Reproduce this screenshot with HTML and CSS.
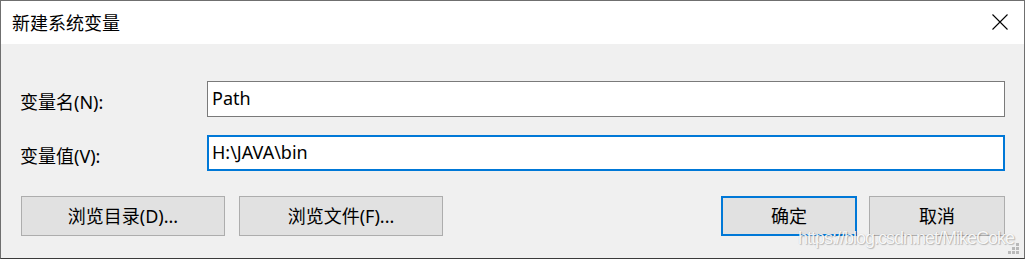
FILE: index.html
```html
<!DOCTYPE html>
<html lang="zh-CN">
<head>
    <meta charset="UTF-8">
    <title>新建系统变量</title>
    <link rel="stylesheet" href="styles.css">
</head>
<body>
    <div class="window">
        <div class="titlebar">
            <span class="title">新建系统变量</span>
            <svg class="close" width="16" height="16" viewBox="0 0 16 16">
                <path d="M0.5 0.5 L15.5 15.5 M15.5 0.5 L0.5 15.5" stroke="#000" stroke-width="1.1" fill="none"/>
            </svg>
        </div>

        <div class="content">
            <div class="row">
                <label class="label" for="var-name">变量名(N):</label>
                <input class="field" type="text" id="var-name" value="Path">
            </div>
            <div class="row">
                <label class="label" for="var-value">变量值(V):</label>
                <input class="field focused" type="text" id="var-value" value="H:\JAVA\bin">
            </div>

            <div class="buttons">
                <div class="group">
                    <button class="btn wide">浏览目录(D)...</button>
                    <button class="btn wide">浏览文件(F)...</button>
                </div>
                <div class="group right">
                    <button class="btn small default">确定</button>
                    <button class="btn small">取消</button>
                </div>
            </div>
        </div>

        <!-- watermark and resize grip sit over the dialog -->
        <div class="watermark">https://blog.csdn.net/MikeCoke</div>
        <svg class="grip" width="12" height="12" viewBox="0 0 12 12">
            <rect x="8" y="0" width="3" height="3" fill="#b9b9b9"/>
            <rect x="4" y="4" width="3" height="3" fill="#b9b9b9"/>
            <rect x="8" y="4" width="3" height="3" fill="#b9b9b9"/>
            <rect x="0" y="8" width="3" height="3" fill="#b9b9b9"/>
            <rect x="4" y="8" width="3" height="3" fill="#b9b9b9"/>
            <rect x="8" y="8" width="3" height="3" fill="#b9b9b9"/>
        </svg>
    </div>
</body>
</html>
```

FILE: styles.css
```css
body {
    margin: 0;
    font-family: "Noto Sans", "Noto Sans CJK SC", sans-serif;
    background: #3c3c3c;
}
.window {
    position: relative;
    box-sizing: border-box;
    width: 1025px;
    height: 259px;
    border: 1px solid #6f6f6f;
    border-bottom-color: #3a3a3a;
    background: #f0f0f0;
    display: flex;
    flex-direction: column;
}
.titlebar {
    height: 43px;
    background: #fff;
    display: flex;
    align-items: center;
    justify-content: space-between;
    padding: 0 16px 0 11px;
    flex-shrink: 0;
}
.title {
    font-size: 18px;
    color: #000;
    line-height: 1;
    padding-top: 1px;
}
.close {
    margin-top: -1px;
}
.content {
    padding: 37px 19px 0 19px;
    display: flex;
    flex-direction: column;
    gap: 18px;
}
.row {
    display: flex;
    align-items: center;
    justify-content: space-between;
    height: 36px;
}
.label {
    font-size: 18px;
    color: #000;
    padding-top: 3px;
}
.field {
    box-sizing: border-box;
    width: 798px;
    height: 36px;
    margin: 0;
    padding: 0 0 2px 4px;
    border: 1px solid #7a7a7a;
    background: #fff;
    font-family: "Noto Sans", "Noto Sans CJK SC", sans-serif;
    font-size: 18px;
    color: #000;
    outline: none;
}
.field.focused {
    border: 2px solid #0078d7;
    padding-left: 3px;
}
.buttons {
    display: flex;
    justify-content: space-between;
    margin-top: 7px;
}
.group {
    display: flex;
    gap: 14px;
    padding-left: 1px;
}
.group.right {
    gap: 12px;
    padding-left: 0;
}
.btn {
    box-sizing: border-box;
    height: 40px;
    margin: 0;
    border: 1px solid #adadad;
    background: #e1e1e1;
    font-family: "Noto Sans", "Noto Sans CJK SC", sans-serif;
    font-size: 18px;
    color: #000;
    padding: 0 0 2px 0;
}
.btn.wide {
    width: 204px;
}
.btn.small {
    width: 136px;
}
.btn.default {
    border: 2px solid #0078d7;
}
.watermark {
    position: absolute;
    left: 797px;
    top: 227px;
    font-family: "Liberation Sans", Arial, sans-serif;
    font-size: 18px;
    letter-spacing: -1px;
    color: rgba(255, 255, 255, 0.92);
    text-shadow: 1px 1px 1px rgba(0, 0, 0, 0.22), 0 0 1px rgba(0, 0, 0, 0.18);
}
.grip {
    position: absolute;
    right: 4px;
    bottom: 3px;
}
```
